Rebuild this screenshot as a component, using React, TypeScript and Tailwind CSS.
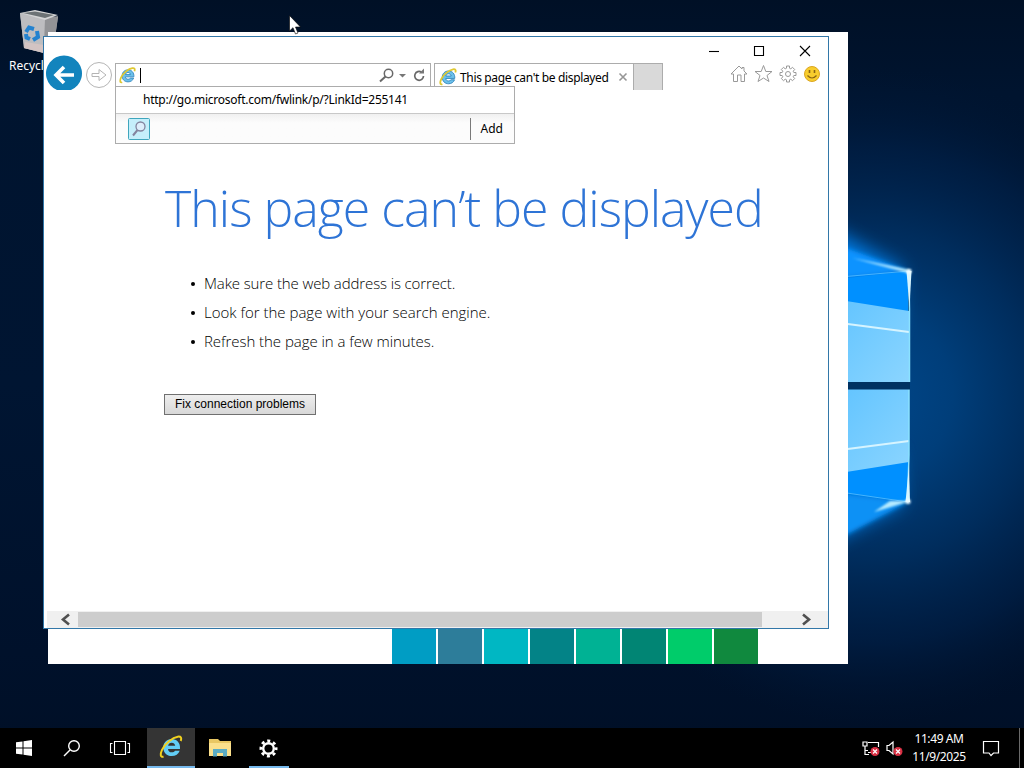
import React from "react";

const UI = "font-['Noto_Sans','Open_Sans',sans-serif]";

function Wallpaper() {
  return (
    <svg className="absolute inset-0" width="1024" height="768" viewBox="0 0 1024 768">
      <defs>
        <linearGradient id="base" x1="0" y1="0" x2="0" y2="1">
          <stop offset="0" stopColor="#001026" />
          <stop offset="0.12" stopColor="#00142f" />
          <stop offset="0.5" stopColor="#001532" />
          <stop offset="0.85" stopColor="#00112b" />
          <stop offset="1" stopColor="#000f26" />
        </linearGradient>
        <radialGradient id="glow" gradientUnits="userSpaceOnUse" cx="870" cy="395" r="330">
          <stop offset="0" stopColor="#00478a" />
          <stop offset="0.25" stopColor="#003e7a" />
          <stop offset="0.5" stopColor="#002e5f" stopOpacity="0.95" />
          <stop offset="0.75" stopColor="#002048" stopOpacity="0.7" />
          <stop offset="1" stopColor="#001532" stopOpacity="0" />
        </radialGradient>
        <linearGradient id="pane" x1="0" y1="0" x2="1" y2="1">
          <stop offset="0" stopColor="#62c4ff" />
          <stop offset="1" stopColor="#8bd5ff" />
        </linearGradient>
        <filter id="b10" x="-50%" y="-50%" width="200%" height="200%"><feGaussianBlur stdDeviation="9" /></filter>
        <filter id="b3" x="-50%" y="-50%" width="200%" height="200%"><feGaussianBlur stdDeviation="2.2" /></filter>
        <filter id="b1" x="-50%" y="-50%" width="200%" height="200%"><feGaussianBlur stdDeviation="1" /></filter>
      </defs>
      <rect width="1024" height="768" fill="url(#base)" />
      <rect x="520" y="60" width="504" height="670" fill="url(#glow)" />
      <path d="M820 222L902 268L898 330H820Z" fill="#0079e0" filter="url(#b10)" />
      <path d="M820 548L902 504L898 450H820Z" fill="#0079e0" filter="url(#b10)" />
      <path d="M840 246L908 271L840 278Z" fill="#1093ff" filter="url(#b3)" />
      <path d="M840 279L908 271V382H840Z" fill="#0090ff" />
      <path d="M840 300L909 311V382H840Z" fill="url(#pane)" />
      <path d="M840 323L909 332" stroke="#d6f4ff" strokeWidth="2" />
      <path d="M840 389H909V462L908 502L840 492Z" fill="#0090ff" />
      <path d="M840 389H909V462L840 473Z" fill="url(#pane)" />
      <path d="M840 450L909 441" stroke="#d6f4ff" strokeWidth="2" />
      <path d="M840 494L908 502L840 538Z" fill="#0a91f5" filter="url(#b3)" />
      <path d="M840 277L909 271" stroke="#45b4ff" strokeWidth="1" />
      <path d="M840 492L908 502" stroke="#45b4ff" strokeWidth="1" />
      <path d="M909 271L909.500 310V382" stroke="#8be2ff" strokeWidth="1.500" fill="none" />
      <path d="M909 389V455L907.500 502" stroke="#8be2ff" strokeWidth="1.500" fill="none" />
      <path d="M852 258L911 270L908 273Z" fill="#b5eaff" filter="url(#b1)" />
      <path d="M874 512L911 501L890 501Z" fill="#b5eaff" filter="url(#b1)" />
      <path d="M906.500 271H911.500L909.500 308Z" fill="#d8f6ff" />
      <path d="M905.500 502H910L909 465Z" fill="#d8f6ff" />
      <circle cx="909" cy="271.500" r="2.500" fill="#effcff" filter="url(#b1)" />
      <circle cx="908" cy="501.500" r="2.500" fill="#effcff" filter="url(#b1)" />
      <rect x="840" y="382" width="70" height="7.500" fill="#003262" />
    </svg>
  );
}

function RecycleBin() {
  return (
    <svg width="40" height="44" viewBox="0 0 40 44">
      <path d="M0 3L38 7L33 42L24 43L4 38Z" fill="#a9a9ab" />
      <path d="M0 3L25 9L24 43L4 38Z" fill="#bdbdc0" />
      <path d="M25 9L38 6L33 42L24 43Z" fill="#929396" />
      <path d="M0 3L15 0L38 5L25 10Z" fill="#d4d5d6" />
      <path d="M3 3L15 1.500L34 5L25 8Z" fill="#6c7275" />
      <path d="M5 32L24 35V43L4 38Z" fill="#d3c4c3" />
      <g fill="none" stroke="#2382cf" strokeWidth="4">
        <path d="M6 22L9 17.500L14 19" />
        <path d="M17 21L18 27L13 30" />
        <path d="M10 29L6.500 27.500L6 24" />
      </g>
    </svg>
  );
}

function IeLogo({ size, light }: { size: number; light?: boolean }) {
  return (
    <svg width={size} height={size} viewBox="0 0 24 24">
      <path
        d="M12.600 4C7.800 4 4.300 7.600 4.300 12.400C4.300 17.400 7.800 21 12.800 21C16.600 21 19.500 19 20.700 15.700H16C15.300 16.800 14.200 17.300 12.800 17.300C10.600 17.300 9.200 16 9 13.900H21C21.500 8 18 4 12.600 4ZM9.100 10.700C9.500 8.800 10.800 7.700 12.700 7.700C14.600 7.700 15.900 8.800 16.200 10.700Z"
        fill={light ? "#62cdf5" : "#6cc0ea"}
        stroke={light ? "none" : "#2f84bd"}
        strokeWidth="1.200"
      />
      <path
        d="M4.500 21.500C1.500 22.800 0.800 19.500 3 14.800C6 8.500 13.500 2.500 18.800 1.700C22 1.200 23 3 21.700 6"
        fill="none"
        stroke={light ? "#f2d21f" : "#dfc832"}
        strokeWidth={light ? "2" : "2.400"}
      />
    </svg>
  );
}

function TitleBar() {
  return (
    <div className="flex h-[26px] items-center justify-end pr-[16px]">
      <svg width="104" height="14" viewBox="0 0 104 14" fill="none" stroke="#000" strokeWidth="1.100">
        <path d="M1 8.500H11" />
        <path d="M46.500 3.500H55.500V12.500H46.500Z" />
        <path d="M92 3L102 13M102 3L92 13" />
      </svg>
    </div>
  );
}

function AddressRow() {
  return (
    <div className="flex h-[28px]">
      <svg className="mt-[-8px] ml-[1px] shrink-0" width="70" height="36" viewBox="0 0 70 36">
        <path d="M12 35A18 18 0 1 1 26 35Z" fill="#1284bd" />
        <path d="M29 20H10.500M19 12L11 20L19 28" fill="none" stroke="#fff" strokeWidth="3.600" />
        <circle cx="54" cy="20" r="12.500" fill="#fff" stroke="#b5b5b5" />
        <path d="M47 18.500H54V14.500L61 20L54 25.500V21.500H47Z" fill="none" stroke="#b4b4b4" />
      </svg>
      <div className="flex h-[24px] w-[316px] shrink-0 border border-[#acacac] bg-white pl-[3px]">
        <div className="mt-[3px]"><IeLogo size={17} /></div>
        <div className="mt-[4px] ml-[4px] h-[15px] w-px bg-black" />
        <svg className="mt-[3px] ml-auto mr-[4px]" width="48" height="17" viewBox="0 0 48 17" fill="none" stroke="#686868">
          <circle cx="10.500" cy="6.500" r="4.200" strokeWidth="1.500" />
          <path d="M7.500 9.500L2 14.500" strokeWidth="2" />
          <path d="M21 7H28L24.500 10.500Z" fill="#777" stroke="none" />
          <path d="M43.500 5.200A4.400 4.400 0 1 0 45.500 9" strokeWidth="1.700" />
          <path d="M41 6.500H46V1.500Z" fill="#777" stroke="none" />
        </svg>
      </div>
      <div className="ml-[3px] flex h-[27px] w-[200px] shrink-0 border border-b-0 border-[#acacac] bg-white pl-[4px]">
        <div className="mt-[4px]"><IeLogo size={18} /></div>
        <span className={UI + " ml-[3px] mt-[5px] whitespace-nowrap text-[12px] leading-[17px] tracking-[-0.35px] text-black"}>This page can't be displayed</span>
        <svg className="mt-[8px] ml-auto mr-[5px]" width="10" height="10" viewBox="0 0 10 10" stroke="#969696" strokeWidth="1.600">
          <path d="M1.500 1.500L8.500 8.500M8.500 1.500L1.500 8.500" />
        </svg>
      </div>
      <div className="h-[27px] w-[29px] shrink-0 border-r border-t border-[#acacac] bg-[#d9d9d9]" />
      <svg className="ml-[67px] mt-[1px] shrink-0" width="92" height="20" viewBox="0 0 92 20" fill="none" stroke="#999">
        <path d="M1 10L9 2L12 5V3.500H14V7L17 10H14.500V17.500H11V11H7.500V17.500H3.500V10Z" />
        <path d="M33.500 1.500L35.800 7.500H42L37 11.500L39 17.500L33.500 14L28 17.500L30 11.500L25 7.500H31.200Z" />
        <g transform="translate(49 1)">
          <path d="M7.500 1h3v2.200l1.300.6 1.700-1.500 2.200 2.200-1.500 1.700.6 1.300H17v3h-2.200l-.6 1.300 1.500 1.700-2.200 2.200-1.700-1.500-1.300.6V17h-3v-2.200l-1.300-.6-1.700 1.500-2.200-2.200 1.500-1.700-.6-1.300H1v-3h2.200l.6-1.300-1.500-1.700 2.200-2.200 1.700 1.500 1.300-.6z" />
          <circle cx="9" cy="9" r="2.500" />
        </g>
        <circle cx="82" cy="10" r="7.500" fill="#f8cd2d" stroke="#dba622" />
        <path d="M79.500 6V9M84.500 6V9" stroke="#8a6514" strokeWidth="1.600" />
        <path d="M77.500 11.500Q82 16.500 86.500 11.500" stroke="#8a6514" strokeWidth="1.200" />
      </svg>
    </div>
  );
}

function Suggestions() {
  return (
    <div className={UI + " absolute left-[71px] top-[49px] h-[58px] w-[400px] border border-[#acacac] bg-white text-[12px] text-black"}>
      <div className="h-[27px] border-b border-[#c8c8c8] pl-[27px] leading-[26px]"><span className="tracking-[-0.25px]">http://go.microsoft.com/fwlink/p/?LinkId=255141</span></div>
      <div className="flex h-[29px] items-center bg-linear-to-b from-[#f0f0f0] to-[#fcfcfc] to-30%">
        <svg className="ml-[12px]" width="22" height="22" viewBox="0 0 22 22" fill="none">
          <rect x="0.500" y="0.500" width="21" height="21" rx="1" fill="#c5effb" stroke="#3fa6bd" />
          <circle cx="12.500" cy="8.500" r="4.500" fill="#ddeefb" stroke="#84849e" strokeWidth="1.300" />
          <path d="M9.500 12L5 17.500" stroke="#84849e" strokeWidth="2" />
        </svg>
        <div className="ml-auto mr-[10px] h-[22px] w-px bg-[#7a7a7a]" />
        <span className="mr-[11px]">Add</span>
      </div>
    </div>
  );
}

const tips = [
  { text: "Make sure the web address is correct.", tracking: "tracking-[-0.12px]" },
  { text: "Look for the page with your search engine.", tracking: "tracking-normal" },
  { text: "Refresh the page in a few minutes.", tracking: "tracking-[-0.05px]" },
];

function ErrorPage() {
  return (
    <div className="h-[520px] pl-[120px] pt-[83px] font-['Open_Sans','Noto_Sans',sans-serif] font-light">
      <h1 className="pl-px whitespace-nowrap text-[50px] leading-[68px] tracking-[-0.97px] text-[#2e74d6]">This page can’t be displayed</h1>
      <ul className="mt-[27px] text-[15px] leading-[29px] text-black">
        {tips.map((tip) => (
          <li key={tip.text} className="flex items-center">
            <span className="ml-[27px] mr-[9px] size-[4px] rounded-full bg-black" />
            <span className={"whitespace-nowrap " + tip.tracking}>{tip.text}</span>
          </li>
        ))}
      </ul>
      <button className="mt-[38px] block h-[21px] w-[152px] border border-[#707070] bg-linear-to-b from-[#eeeeee] to-[#d8d8d8] pb-[1px] text-center font-['Liberation_Sans',sans-serif] text-[12px] leading-[18px] font-normal text-black">
        Fix connection problems
      </button>
    </div>
  );
}

function ScrollBar() {
  return (
    <div className="ml-[3px] flex h-[17px] items-center bg-[#f0f0f0] text-[#505050]">
      <svg width="31" height="17" viewBox="0 0 31 17" fill="none" stroke="currentColor" strokeWidth="2.600"><path d="M22 3.500L16 8.500L22 13.500" /></svg>
      <div className="h-[15px] w-[684px] bg-[#cdcdcd]" />
      <svg className="ml-[38px]" width="18" height="17" viewBox="0 0 18 17" fill="none" stroke="currentColor" strokeWidth="2.600"><path d="M3 3.500L9 8.500L3 13.500" /></svg>
    </div>
  );
}

function BrowserWindow() {
  return (
    <div className="absolute left-[43px] top-[36px] flex h-[593px] w-[786px] flex-col border border-[#3277a8] bg-white">
      <TitleBar />
      <AddressRow />
      <ErrorPage />
      <ScrollBar />
      <Suggestions />
    </div>
  );
}

function BackWindow() {
  return (
    <div className="absolute left-[48px] top-[32px] flex h-[632px] w-[800px] items-end gap-[2px] bg-white pl-[344px]">
      {["bg-[#009dc4]", "bg-[#2d7d9a]", "bg-[#00b7c3]", "bg-[#038387]", "bg-[#00b294]", "bg-[#018574]", "bg-[#00cc6a]", "bg-[#10893e]"].map((c) => (
        <div key={c} className={"h-[44px] w-[44px] " + c} />
      ))}
    </div>
  );
}

function Taskbar() {
  return (
    <div className={UI + " absolute bottom-0 left-0 flex h-[40px] w-full bg-black text-[12px] text-white"}>
      <div className="flex w-[48px] items-center justify-center">
        <svg width="16" height="16" viewBox="0 0 16 16" fill="#fff"><path d="M0 2.300L6.500 1.400V7.500H0ZM7.500 1.200L16 0V7.500H7.500ZM0 8.500H6.500V14.600L0 13.700ZM7.500 8.500H16V16L7.500 14.800Z" /></svg>
      </div>
      <div className="flex w-[48px] items-center justify-center">
        <svg width="18" height="18" viewBox="0 0 18 18" fill="none" stroke="#fff" strokeWidth="1.400"><circle cx="11" cy="7" r="5.300" /><path d="M7 11L1 17" /></svg>
      </div>
      <div className="flex w-[51px] items-center pl-[13px]">
        <svg width="22" height="16" viewBox="0 0 22 16" fill="none" stroke="#fff" strokeWidth="1.100"><path d="M5.500 1.500H16.500V14.500H5.500ZM3.500 3.500H1.500V12.500H3.500M18.500 3.500H20.500V12.500H18.500" /></svg>
      </div>
      <div className="flex w-[48px] items-center justify-center border-b-2 border-[#76b9ed] bg-[#343434] pr-[1px]"><IeLogo size={24} light /></div>
      <div className="flex w-[50px] items-center justify-center">
        <svg width="22" height="20" viewBox="0 0 22 20"><path d="M0 1H9L11 3H22V18H0Z" fill="#e9c763" /><path d="M0 5H22V18H0Z" fill="#fbe08c" /><path d="M4 11H18V18.500H14V15H8V18.500H4Z" fill="#5bacc4" /></svg>
      </div>
      <div className="ml-[4px] flex w-[40px] items-center justify-center border-b-2 border-[#76b9ed] pr-[1px] pt-[2px]">
        <svg width="19" height="19" viewBox="0 0 19 19" fill="none" stroke="#fff"><circle cx="9.500" cy="9.500" r="5.300" strokeWidth="2.400" /><circle cx="9.500" cy="9.500" r="7.600" strokeWidth="2.800" strokeDasharray="3 2.969" strokeDashoffset="1.500" /></svg>
      </div>
      <div className="ml-auto flex items-center">
        <svg width="42" height="18" viewBox="0 0 42 18" fill="none" stroke="#fff" strokeWidth="1.200">
          <path d="M6 3.500H16.500V8M6 13.500H9M1 3H5V7H1ZM3 7V15.500H7M3 11.500H6" />
          <path d="M25 6.500H27L31 3V15L27 11.500H25Z" />
          <circle cx="13" cy="12.500" r="4.500" fill="#d92f43" stroke="none" /><path d="M11 10.500L15 14.500M15 10.500L11 14.500" />
          <circle cx="36" cy="12.500" r="4.500" fill="#d92f43" stroke="none" /><path d="M34 10.500L38 14.500M38 10.500L34 14.500" />
        </svg>
        <div className="ml-[5px] flex w-[60px] flex-col items-center whitespace-nowrap leading-[18px] tracking-[-0.4px]"><span>11:49 AM</span><span>11/9/2025</span></div>
        <svg className="ml-[13px] mr-[19px]" width="18" height="18" viewBox="0 0 18 18" fill="none" stroke="#fff" strokeWidth="1.200"><path d="M1.500 2.500H16.500V14H11.500L9 16.500L7 14H1.500Z" /></svg>
        <div className="mr-[4px] h-[40px] w-px bg-[#6a6a6a]" />
      </div>
    </div>
  );
}

export default function App() {
  return (
    <div className="relative h-[768px] w-[1024px] overflow-hidden bg-[#00142f]">
      <Wallpaper />
      <div className={UI + " absolute left-[9px] top-[10px] text-[12px] text-white"}>
        <div className="ml-[11px]"><RecycleBin /></div>
        <div className="mt-[3px] whitespace-nowrap leading-[17px]">Recycl</div>
      </div>
      <BackWindow />
      <BrowserWindow />
      <Taskbar />
      <svg className="absolute left-[289px] top-[15px]" width="13" height="20" viewBox="0 0 13 20"><path d="M.5 .5V16L4 12.700L6.500 19L9 18L6.500 12H11.500Z" fill="#fff" stroke="#000" strokeWidth=".6" /></svg>
    </div>
  );
}
